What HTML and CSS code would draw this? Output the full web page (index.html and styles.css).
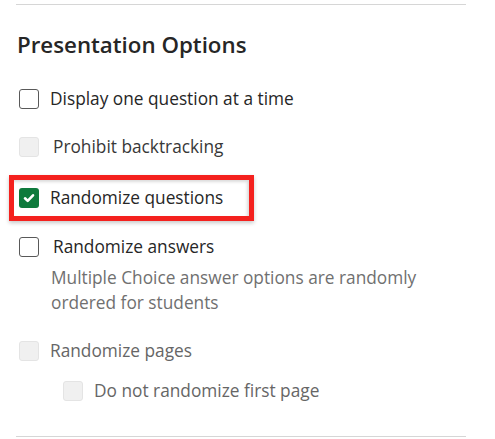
FILE: index.html
```html
<!DOCTYPE html>
<html>
<head>
<meta charset="utf-8">
<link rel="stylesheet" href="styles.css">
</head>
<body>
<div class="panel">
  <hr class="rule">
  <h2 class="title">Presentation Options</h2>
  <div class="options">
    <label class="opt">
      <span class="box"></span>
      <span class="label">Display one question at a time</span>
    </label>
    <label class="opt disabled dark wide r2">
      <span class="box"></span>
      <span class="label">Prohibit backtracking</span>
    </label>
    <div class="highlight">
      <label class="opt checked">
        <span class="box"><svg viewBox="0 0 20 20" width="20" height="20"><path d="M6 10.3 L8.7 12.9 L14 7.3" fill="none" stroke="#fff" stroke-width="2.6" stroke-linecap="round" stroke-linejoin="round"/></svg></span>
        <span class="label">Randomize questions</span>
      </label>
    </div>
    <div class="opt-group">
      <label class="opt wide">
        <span class="box"></span>
        <span class="label">Randomize answers</span>
      </label>
      <p class="desc">Multiple Choice answer options are randomly ordered for students</p>
    </div>
    <label class="opt disabled r5">
      <span class="box"></span>
      <span class="label">Randomize pages</span>
    </label>
    <label class="opt disabled nested">
      <span class="box"></span>
      <span class="label">Do not randomize first page</span>
    </label>
  </div>
  <hr class="rule bottom">
</div>
</body>
</html>
```
FILE: styles.css
```css
html, body {
  margin: 0;
  padding: 0;
  background: #fff;
}
body {
  font-family: "Open Sans", "Noto Sans", sans-serif;
  color: #262626;
}
.panel {
  width: 450px;
  padding: 0 29px 0 16px;
}
.rule {
  margin: 4px 0 0 0;
  border: none;
  border-top: 1px solid #d6d6d6;
}
.rule.bottom {
  margin-top: 33px;
}
.title {
  margin: 25px 0 0 1px;
  font-size: 22.3px;
  font-weight: 600;
  line-height: 30px;
  color: #262626;
}
.options {
  display: flex;
  flex-direction: column;
  margin-top: 27px;
}
.opt {
  display: flex;
  align-items: center;
  height: 24px;
  margin-left: 3px;
  font-size: 17.3px;
  line-height: 24px;
}
.box {
  box-sizing: border-box;
  flex: none;
  width: 20px;
  height: 20px;
  border: 1.5px solid #595959;
  border-radius: 3px;
  background: #fff;
  display: flex;
  align-items: center;
  justify-content: center;
}
.box svg {
  display: block;
}
.label {
  margin-left: 11px;
}
.wide .label {
  margin-left: 14px;
}
.disabled .box {
  border: 1px solid #e4e4e4;
  background: #f0f0f0;
}
.disabled {
  color: #666;
}
.disabled.dark {
  color: #383838;
}
.r2 {
  margin-top: 23.5px;
}
.checked .box {
  border: none;
  background: #0e7a3c;
}
.highlight {
  margin: 16px 0 0 -7px;
  width: 230px;
  padding: 6px 0 6px 5px;
  border: 5px solid #f4211e;
  box-shadow: 0 2px 4px rgba(0, 0, 0, 0.22), inset -2px 2px 3px rgba(0, 0, 0, 0.14);
}
.highlight .opt {
  margin-left: 0;
}
.opt-group {
  margin-top: 14px;
}
.desc {
  margin: 6.5px 0 0 35px;
  font-size: 17.3px;
  line-height: 25px;
  color: #707070;
  width: 390px;
}
.r5 {
  margin-top: 23.5px;
}
.nested {
  margin-left: 47px;
  margin-top: 16px;
}
```
